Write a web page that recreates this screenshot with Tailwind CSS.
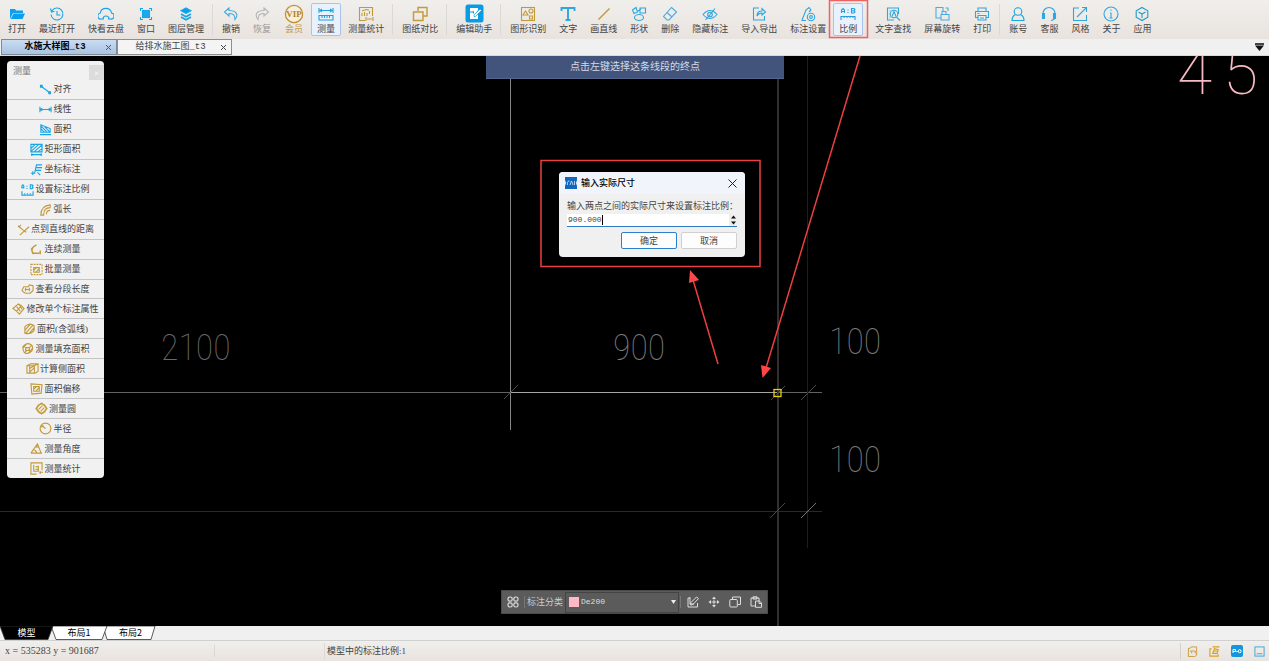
<!DOCTYPE html>
<html lang="zh-CN">
<head>
<meta charset="utf-8">
<title>水施大样图_t3</title>
<script src="https://cdn.jsdelivr.net/npm/@tailwindcss/browser@4"></script>
</head>
<body class="relative flex h-screen flex-col overflow-hidden bg-[#f0f0f0] font-['Liberation_Serif','Noto_Sans_CJK_SC',sans-serif] text-[9px] leading-3 text-[#444]">

<header id="toolbar" class="flex h-[39px] shrink-0 items-stretch gap-px bg-linear-to-b from-[#f0efec] to-[#e9e3df] pl-0.5"></header>

<nav class="flex h-[17px] shrink-0 items-end border-b border-[#d9d9d9] pl-px font-['Liberation_Mono','Noto_Sans_CJK_SC',monospace]">
  <div class="flex h-4 w-[116px] items-center border border-[#7f8a99] bg-linear-to-b from-[#c9dcf2] to-[#a9c3e2] font-bold text-black">
    <a href="#" class="flex-1 pl-2 text-center">水施大样图_t3</a>
    <button aria-label="关闭" class="flex w-4 justify-center"><svg class="size-[7px]" viewBox="0 0 7 7" fill="none" stroke="#555"><path d="M1 1l5 5M6 1L1 6"/></svg></button>
  </div>
  <div class="flex h-4 w-[115px] items-center border border-[#8e8e8e] bg-[#f4f4f4]">
    <a href="#" class="flex-1 pl-2 text-center">给排水施工图_t3</a>
    <button aria-label="关闭" class="flex w-4 justify-center"><svg class="size-[7px]" viewBox="0 0 7 7" fill="none" stroke="#444"><path d="M1 1l5 5M6 1L1 6"/></svg></button>
  </div>
  <button aria-label="标签列表" class="mr-[5px] mb-1 ml-auto"><svg class="h-2 w-[9px]" viewBox="0 0 9 8"><path d="M0 0h9v2H0z" fill="#444"/><path d="M0 2.500h9L4.500 8z" fill="#111"/></svg></button>
</nav>

<main class="relative min-h-0 flex-1 overflow-hidden bg-black">
  <svg class="absolute inset-0 h-full w-full" fill="none">
    <g shape-rendering="crispEdges">
      <path d="M0 336.500H511M778 336.500H822" stroke="#626262"/>
      <path d="M511 336.500H778" stroke="#a6a6a6"/>
      <path d="M0 455.500H822" stroke="#292929"/>
      <path d="M510.500 23V374" stroke="#858585"/>
      <path d="M778 0V570" stroke="#303030" stroke-width="2"/>
      <path d="M807.500 0V492" stroke="#1d1d1d"/>
    </g>
    <path d="M504 343l14-14M771 344l14-14M801 344l15-15M770 462l15-15" stroke="#4a4a4a"/>
    <path d="M801 462l15-15" stroke="#777"/>
    <rect x="774" y="333.500" width="7" height="7" stroke="#e8cf10" stroke-width="1.300"/>
  </svg>

  <div class="absolute top-[268px] left-[161px] font-['Roboto_Condensed','Roboto',sans-serif] text-[36px] leading-12 font-thin text-[#6a6a6a]">2100</div>
  <div class="absolute top-[268px] left-[613px] font-['Roboto_Condensed','Roboto',sans-serif] text-[36px] leading-12 font-thin text-[#7c7c7c]">900</div>
  <div class="absolute top-[262px] left-[829px] font-['Roboto_Condensed','Roboto',sans-serif] text-[36px] leading-12 font-thin text-[#7c7c7c]">100</div>
  <div class="absolute top-[380px] left-[829px] font-['Roboto_Condensed','Roboto',sans-serif] text-[36px] leading-12 font-thin text-[#7c7c7c]">100</div>
  <div class="absolute -top-[15px] left-[1177px] flex gap-[11px] font-['Roboto',sans-serif] text-[64px] leading-16 font-thin text-[#f7b9c2]"><span>4</span><span>5</span></div>

  <div class="absolute top-0 left-[486px] w-[298px] border-b border-[#53658c] bg-[#42547b] py-[5px] text-center text-[10px] text-[#d5dae5]">点击左键选择这条线段的终点</div>

  <aside class="absolute top-[5px] left-[7px] flex h-[417px] w-[97px] flex-col rounded-sm bg-[#f1f1f1]">
    <div class="flex h-[19px] shrink-0 items-center pl-1.5 text-[#777]"><span class="flex-1">测量</span><button aria-label="关闭测量" class="mt-1 flex size-[15px] items-center justify-center bg-[#dcdcdc] text-white">×</button></div>
    <div id="measure" class="flex min-h-0 flex-1 flex-col divide-y divide-[#c4c4c4]"></div>
  </aside>

  <section role="dialog" aria-labelledby="dlg" class="absolute top-[116px] left-[559px] w-[186px] overflow-hidden rounded bg-[#f0f0f0] pb-2">
    <div class="flex h-[22px] items-center bg-[#f1f4fb] px-1.5">
      <svg class="size-3" viewBox="0 0 12 12"><path d="M0 0h12v3l-1 3 1 3v3H0V9l1-3-1-3z" fill="#1266bd"/><path d="M2.500 8V5.500q0-1.500 2-1.500M5 8l1.500-4L8 8M9.500 4v4" stroke="#d6e9ff" fill="none" stroke-width=".8"/></svg>
      <h2 id="dlg" class="flex-1 pl-1 font-medium text-black">输入实际尺寸</h2>
      <button aria-label="关闭" class="mr-0.5"><svg class="size-[9px]" viewBox="0 0 9 9" fill="none" stroke="#222"><path d="M.5 .5l8 8M8.500 .5l-8 8"/></svg></button>
    </div>
    <div class="px-2 pt-1.5">
      <label for="size" class="block whitespace-nowrap">输入两点之间的实际尺寸来设置标注比例：</label>
      <div class="mt-0.5 flex h-[13px] items-center border-b border-[#2f78c0] bg-white">
        <input id="size" value="900.000" class="w-9 border-r border-black pl-px font-['Liberation_Mono',monospace] text-[8px] leading-[10px] outline-none">
        <button aria-label="增减" class="ml-auto flex h-full w-2 items-center justify-center bg-[#eee]"><svg class="h-2.5 w-[5px]" viewBox="0 0 5 10"><path d="M0 3.500L2.500 .5 5 3.500zM0 6.500h5L2.500 9.500z" fill="#111"/></svg></button>
      </div>
      <div class="mt-[5px] flex justify-end gap-1">
        <button class="h-[17px] w-14 rounded-xs border border-[#2c7fcb] bg-[#fdfdfd]">确定</button>
        <button class="h-[17px] w-14 rounded-xs border border-[#d0d0d0] bg-[#fdfdfd]">取消</button>
      </div>
    </div>
  </section>

  <section class="absolute top-[534px] left-[501px] flex h-6 w-[267px] items-center border border-[#4a4a4a] bg-[#5b5b5b] text-[#ccc]">
    <button aria-label="全部" class="flex w-[22px] justify-center"><svg class="size-3" viewBox="0 0 12 12" fill="none" stroke="#ddd" stroke-width="1.200"><rect x="1" y="1" width="4.200" height="4.200" rx="1.800"/><rect x="6.800" y="1" width="4.200" height="4.200" rx="1.800"/><rect x="1" y="6.800" width="4.200" height="4.200" rx="1.800"/><rect x="6.800" y="6.800" width="4.200" height="4.200" rx="1.800"/></svg></button>
    <label for="cat" class="border-l border-[#777] px-0.5">标注分类</label>
    <div class="relative flex h-[21px] flex-1 items-center border border-[#444] pl-[3px]">
      <span class="size-2.5 shrink-0 bg-[#ffb9c6]"></span>
      <select id="cat" class="h-full min-w-0 flex-1 appearance-none bg-transparent pl-0.5 font-['Liberation_Mono',monospace] text-[8px] leading-3 text-[#ddd]"><option>De200</option></select>
      <svg class="pointer-events-none absolute right-0.5 h-1 w-[5px]" viewBox="0 0 5 4"><path d="M0 0h5L2.500 4z" fill="#eee"/></svg>
    </div>
    <div class="ml-px flex items-center gap-[9px] border-l border-[#777] pr-[5px] pl-1.5">
      <button aria-label="编辑"><svg class="size-3" viewBox="0 0 12 12" fill="none" stroke="#ddd"><path d="M3 2H1v9h9.500V7M3.500 9l.5-2.500L9.500 1l2 1.500L6 8.500zM3 1v7h4"/></svg></button>
      <button aria-label="移动"><svg class="size-3" viewBox="0 0 12 12" fill="none" stroke="#ddd"><path d="M6 3.500v5M3.500 6h5"/><path d="M4 3l2-2.500L8 3zM4 9l2 2.500L8 9zM3 4L.5 6 3 8zM9 4l2.500 2L9 8z" fill="#ddd" stroke="none"/></svg></button>
      <button aria-label="复制"><svg class="size-3" viewBox="0 0 12 12" fill="none" stroke="#ddd"><rect x=".8" y="3.500" width="7.500" height="7.500" rx="1"/><path d="M3.500 3V1h8v7.500H9"/></svg></button>
      <button aria-label="粘贴"><svg class="size-3" viewBox="0 0 12 12" fill="none" stroke="#ddd"><path d="M5 10H1V2h8v3M3 2V.8h4V3H3zM5.500 5h4l2 2v4.300h-6zM9 5v2.500h2.500"/></svg></button>
    </div>
  </section>
</main>

<nav class="relative flex h-[15px] shrink-0 border-b border-[#d0d0d0] bg-[#f0f0f0] font-['Noto_Sans_CJK_SC',sans-serif]">
  <svg class="absolute top-0 left-0 h-[14px] w-[160px]" fill="white" stroke="#333" stroke-width=".8"><path d="M103 0h52l-4 13.500h-44z"/><path d="M51 0h56l-5 13.500H56z"/><path d="M0 0h53l-5 13.500H5z" fill="#000"/></svg>
  <a href="#" class="relative w-[53px] text-center leading-[14px] text-white">模型</a>
  <a href="#" class="relative w-[52px] text-center leading-[14px] text-black">布局1</a>
  <a href="#" class="relative w-[51px] text-center leading-[14px] text-black">布局2</a>
</nav>

<footer class="flex h-5 shrink-0 items-center bg-linear-to-b from-[#f0efec] to-[#e9e3df]">
  <div class="w-[215px] border-r border-[#dcd8d4] pl-[5px] text-[10px]">x = 535283 y = 901687</div>
  <div class="h-4 w-[110px] border-r border-[#dcd8d4]"></div>
  <div class="flex-1 pl-0.5">模型中的标注比例:1</div>
  <div class="flex h-4 items-center gap-[11px] border-l border-[#d4d0cc] pr-1 pl-1.5">
    <button aria-label="图层"><svg class="size-[11px]" viewBox="0 0 12 12" fill="none" stroke="#c79a35"><path d="M1.500 2.500h2l1-1.500h6v9l-2 1.500h-7zM3 5.500h6v2.500M5 6v2"/></svg></button>
    <button aria-label="图纸"><svg class="size-[11px]" viewBox="0 0 12 12" fill="none" stroke="#d9a21f" stroke-width="1.200"><path d="M4 1h7.500M3 3H1v8h9V9M4 8l2-5 4 1-1 4zM5.500 5.500h4"/></svg></button>
    <button aria-label="坐标" class="flex size-3 items-center justify-center rounded-xs bg-[#1296dd]"><svg class="size-2.5" viewBox="0 0 10 10" fill="none" stroke="white"><path d="M1 7V3.500h2.500v2H1M4.200 5.500h1.600"/><circle cx="7.700" cy="5.200" r="1.500"/></svg></button>
    <button aria-label="视图"><svg class="size-[11px]" viewBox="0 0 12 12" fill="none" stroke="#36a3d9"><rect x="1" y="1" width="10" height="10"/><path d="M3 8.500h6"/></svg></button>
  </div>
</footer>

<svg class="pointer-events-none absolute inset-0 h-full w-full" fill="none" stroke="#ec3f40">
  <rect x="541" y="160.500" width="219" height="106" stroke-width="1.500"/>
  <rect x="829.500" y=".5" width="38" height="37" stroke="#f26161" stroke-width="1.500"/>
  <path d="M860 56L766 368M718 364L693 280" stroke-width="1.500"/>
  <path d="M761 365l10 3-8.500 10zM689 283l10-3-9-10z" fill="#ff4747" stroke="none"/>
</svg>

<script>
const B = '#17a5e6', G = '#c39a3a';
const tools = [
 ['打开', B, '<path d="M1 13V3h5l1 1.500h7V7H4z" fill="#0b9ff0" stroke="none"/><path d="M4.500 7.500H16L13.500 13H1.800z" fill="#0b9ff0" stroke="none"/>'],
 ['最近打开', B, '<path d="M2.800 5A6 6 0 1 1 2 8.500M1.500 2.500L2.500 6l3-.7M8 5v4h3.500" />'],
 ['快看云盘', B, '<path d="M4 13H3.500A3 3 0 0 1 2.300 7 5.700 5.700 0 0 1 13.500 7 3 3 0 0 1 12.500 13H12M5 13c0-4 6-4 6 0M4 13h2M10 13h2"/>'],
 ['窗口', B, '<rect x="4.500" y="4.500" width="7" height="7" fill="#1ba8ec"/><path d="M2.500 5V2.500H5M11 2.500h2.500V5M13.500 11v2.500H11M5 13.500H2.500V11"/>'],
 ['图层管理', B, '<path d="M8 2l5 2.700-5 2.700-5-2.700z" fill="#0b9ff0"/><path d="M3 8l5 2.700L13 8M3 11l5 2.700 5-2.700" stroke-width="1.700"/>'],
 null,
 ['撤销', '#42a9e0', '<path d="M6 2L1.500 6 6 10V7.500c4 0 6 1 6 6 4-5 1-9-6-9z"/>'],
 ['恢复', '#b5b5b5', '<path d="M10 2l4.500 4-4.500 4V7.500c-4 0-6 1-6 6-4-5-1-9 6-9z"/>'],
 ['会员', G, ''],
 ['测量', '#249fdd', '<path d="M1 2v5M15 2v5M2 4.500h12M4 3L2 4.500 4 6M12 3l2 1.500L12 6M1 9.500h14V14H1zM4 10v2M6.500 10v2M9 10v2M11.500 10v2" />'],
 ['测量统计', G, '<path d="M7 14.500H1.500v-13h13V10M4 10V7M6.500 10V6M9 10V7M11.500 8V5M4 5l4-1.500 3 .5M8 11v4M15 11v4M9 13h5"/>'],
 null,
 ['图纸对比', G, '<path d="M6 5V1.500h9V10h-4M1.500 6H11v8.500H1.500z" stroke-width="1.400"/>'],
 null,
 ['编辑助手', B, ''],
 null,
 ['图形识别', G, '<rect x="1.500" y="1.500" width="13" height="13"/><path d="M5.500 5L8 9H3zM9.500 10h3v3h-3z"/><circle cx="11" cy="5" r="2"/>'],
 ['文字', '#2fa6df', '<path d="M1.500 5V2h13v3M8 2v12M5.500 14h5"  stroke-width="1.900"/>'],
 ['画直线', G, '<path d="M2.500 13.500l11-11" stroke-width="1.400"/>'],
 ['形状', '#2fa6df', '<path d="M1.500 4L5 1.500 6.500 6 3 7.500zM9 2h5.500v5H9zM7 5l3-2"/><ellipse cx="8" cy="11.500" rx="4.500" ry="3"/>'],
 ['删除', '#4cace0', '<path d="M9.500 1.500l5 4.500-7.500 8H5L1.500 10.500zM5 6.500l5 4.500"/>'],
 ['隐藏标注', '#2fa6df', '<path d="M1 8.500q7-8 14 0-7 8-14 0zM3.500 14L13 2.500"/><circle cx="8" cy="8.500" r="2.300"/>'],
 ['导入导出', '#2fa6df', '<path d="M8 2H2.500v12h11v-4M6 10c0-4 2-5 5-5V2.500L14.500 6 11 9V7C9 7 7 8 6 10z"/>'],
 ['标注设置', '#2fa6df', '<path d="M2 14L6 4l3-2.500L11 4 9 6M4 9l2-5M1.500 14.500H6"/><circle cx="11" cy="11" r="3.700"/><circle cx="11" cy="11" r="1.400"/>'],
 ['比例', '#249fdd', '<path d="M1.500 7V4L3 2.500 4.500 4v3M1.500 5.500h3M8 3.500v1M8 6v1M11.500 2.500h2.500L15 3.500 14 4.700 15 6 14 7h-2.500zM11.500 4.700H14M1 14v-3.500h14V14M4 11v1M7 11v1M10 11v1M13 11v1"/>'],
 ['文字查找', '#2fa6df', '<path d="M9 14H2.500V2h11v6M4.500 5h1M4.500 8h1M4.500 11h1M7 10.500l2-5 2 5M11.500 11l3.500 3.500"/><circle cx="9" cy="8" r="3.800"/>'],
 ['屏幕旋转', '#4cace0', '<path d="M9 5V1.500H2V12h5M7 8.500h8v5.500H7zM8 8.500V5.500h4v3M11.500 2h2.500v3"/>'],
 ['打印', '#2fa6df', '<path d="M4 5V2h8v3M4 11.500H1.500v-6h13v6H12M4 9.500h8v4.500H4zM3.500 7.500h2M6 12h4"/>'],
 null,
 ['账号', B, '<circle cx="8" cy="5.500" r="3.800"/><path d="M5.500 8.500C3.500 9.500 2 12 2 14.500h12c0-2.500-1.500-5-3.500-6"/>'],
 ['客服', '#2fa6df', '<path d="M2 9V7.500a6 6 0 0 1 12 0V11q0 3-4 3.500"/><path d="M1.500 7.500h2v5h-2zM12.500 7.500h2v5h-2z" fill="#2fa6df"/>'],
 ['风格', '#2fa6df', '<path d="M7 2H1.500v12.500h13V9M10 1.500h4.500V6M14.500 1.500L5 11"/>'],
 ['关于', '#2fa6df', '<circle cx="8" cy="8" r="7"/><path d="M8 3.500v1.200M7 7h1v5M6.500 12h3"/>'],
 ['应用', '#1d9cc9', '<path d="M8 1.500l5.800 3.200v6.600L8 14.500l-5.800-3.200V4.700zM4.500 6L8 8l3.500-2M8 8v4"/>']
];
const picture = (name, color, body) => {
  if (name === '会员') return '<svg class="size-5" viewBox="0 0 20 20"><circle cx="10" cy="10" r="8.600" fill="#f8f0df" stroke="#bd9139" stroke-width="1.300"/><text x="10" y="13.300" text-anchor="middle" font-size="9" font-weight="bold" fill="#b48318">VIP</text></svg>';
  if (name === '编辑助手') return '<svg class="size-[19px]" viewBox="0 0 19 19"><rect x=".5" y=".5" width="18" height="18" rx="2.500" fill="#089ce5"/><path d="M5 4h8v2l-2 3v2l2-1v5H5z" fill="white"/><path d="M9 11l6-6 1.500 1.500-6 6H9z" fill="white" stroke="#089ce5" stroke-width=".7"/><path d="M6 7v2M8 7v2h1" stroke="#089ce5"/></svg>';
  return `<svg class="size-4" viewBox="0 0 16 16" fill="none" stroke="${color}" stroke-width="1.100">${body}</svg>`;
};
document.getElementById('toolbar').innerHTML = tools.map(t => {
  if (!t) return '<span class="mx-px my-1 w-0.5 border-l border-[#dcd8d5]"></span>';
  const [name, color, body] = t;
  const state = name === '测量' ? 'bg-[#e9f1fc] border-[#a9c3ea]' : name === '比例' ? 'mr-[5px] bg-[#e9f1fc] border-[#a9c3ea]' : 'border-transparent';
  const ink = name === '恢复' ? 'text-[#999]' : name === '会员' ? 'text-[#c29a4e]' : '';
  return `<button class="my-[3px] flex shrink-0 flex-col items-center rounded-xs border px-[5px] whitespace-nowrap ${state} ${ink}"><span class="flex h-[19px] items-center">${picture(name, color, body)}</span><span>${name}</span></button>`;
}).join('');

const measures = [
 ['对齐', B, '<path d="M3 4l8 6"/><path d="M1 2h3v3H1zM10 9h3v3h-3z" fill="#17a5e6" stroke="none"/>'],
 ['线性', B, '<path d="M1 4v6M13 4v6M1 7h12M3.500 5.500L1.500 7l2 1.500M10.500 5.500l2 1.500-2 1.500"/>'],
 ['面积', B, '<path d="M2 10V2l10 4v4zM2 6l4 4M2 3l7 7M6 4l6 6M1 12.500h12"/>'],
 ['矩形面积', B, '<path d="M1 1.500h12v8H1zM1 6l4-4M1 9l8-7M5 9l8-7M9 9l4-3M1 12.500h12M2 11v3M12 11v3"/>'],
 ['坐标标注', B, '<path d="M1 11h4l2-9h6M7 5h6M6 8h6M3 9v4M8 10l3 3"/>'],
 ['设置标注比例', B, '<path d="M1 6V3l1-1 1 1v3M1 5h2M6.500 3v1M6.500 5.500v1M10 2h2l1 1-1 1 1 1-1 1h-2zM1 9v4h12V9M4 11v1M7 11v1M10 11v1"/>'],
 ['弧长', G, '<path d="M2 13Q2 3 12 2v3Q5 5 5 13zM8 12q0-4 4-4"/>'],
 ['点到直线的距离', G, '<path d="M1 3l6 5M3 13L13 4M2 5l2-3M7 8l3 2"/>'],
 ['连续测量', G, '<path d="M7 2Q0 5 3 11h7M11 8v4M1 7l3-3M4 12l-1-2" stroke-width="1.600"/>'],
 ['批量测量', G, '<path d="M1 1.500h12v11H1z" stroke-dasharray="2 1"/><path d="M4 5h6v5H4zM4 8l3-3M6 10l4-4"/>'],
 ['查看分段长度', G, '<path d="M3 10L1 8l2-4h5l1-2 4 1v5l-3 3H5zM4 7h6M5 5v4M9 5v4"/>'],
 ['修改单个标注属性', G, '<path d="M1 7l6-5 3 2-5 6zM4 9l4 4 5-6-3-3M5 5l4 5M8 3l3 5"/>'],
 ['面积(含弧线)', G, '<path d="M2 5q5-5 10-1v5q-4 5-10 3zM2 9l6-7M3 12l8-9M7 12l5-6"/>'],
 ['测量填充面积', G, '<path d="M2 5q5-6 10-1 2 6-4 8-6 2-6-7zM5 6h4v3H5zM2 7l4-5M4 12l2-3M9 6l3-3M8 12l4-5"/>'],
 ['计算侧面积', G, '<path d="M1 4l4-2h8v8l-3 2H1zM1 4h8v8M9 4l4-2M4 4v8M4 7l5-3M4 11l5-5"/>'],
 ['面积偏移', G, '<path d="M1 2l12 1-1 9-10 1zM4 5h6v5H4zM4 8l3-3M6 10l4-4"/>'],
 ['测量圆', G, '<circle cx="7" cy="7" r="5"/><path d="M1 7l6-6 6 6-6 6zM4 8l4-4M6 10l4-4"/>'],
 ['半径', G, '<circle cx="7" cy="7" r="5.800"/><path d="M7 7L3 4M3 6V4h2"/>'],
 ['测量角度', G, '<path d="M1 12h12M1 12L8 2l4 10M4 8q3 1 3 4M6 5l4 1"/>'],
 ['测量统计', G, '<path d="M7 13H1V1h12v8M4 3v7h5V4M6 5h3M6 8h3M10 11h4M11 10v3"/>']
];
document.getElementById('measure').innerHTML = measures.map(([name, color, body]) =>
  `<button class="flex min-h-0 flex-1 items-center justify-center whitespace-nowrap"><svg class="mr-px size-[13px] shrink-0" viewBox="0 0 14 14" fill="none" stroke="${color}" stroke-width="1.200">${body}</svg>${name}</button>`).join('');
</script>
</body>
</html>
